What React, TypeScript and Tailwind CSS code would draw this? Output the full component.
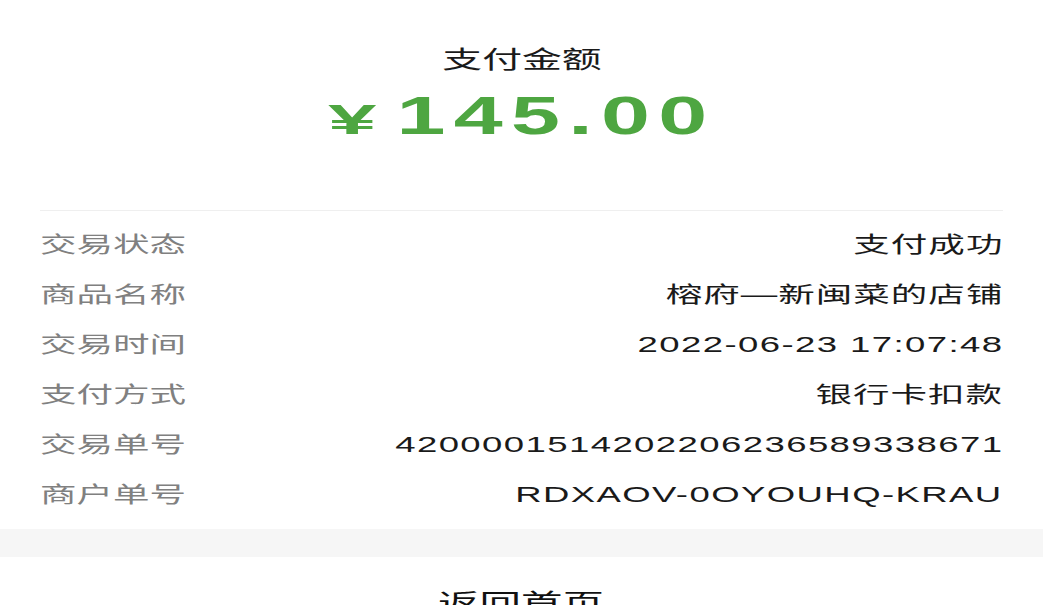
const rows = [
  { label: "交易状态", value: "支付成功", ascii: false },
  { label: "商品名称", value: "榕府—新闽菜的店铺", ascii: false },
  { label: "交易时间", value: "2022-06-23 17:07:48", ascii: true },
  { label: "支付方式", value: "银行卡扣款", ascii: false },
  { label: "交易单号", value: "4200001514202206236589338671", ascii: true },
  { label: "商户单号", value: "RDXAOV-0OYOUHQ-KRAU", ascii: true },
];

const font = "font-['Liberation_Sans','Noto_Sans_CJK_SC',sans-serif]";

const App = () => {
  return (
    <div className={`min-h-screen bg-white ${font}`}>
      <div className="flex flex-col items-center pt-[45px]">
        <div className="text-[24px] leading-[30px] text-[#1a1a1a]">
          <span className="inline-block scale-x-[1.66] origin-center">支付金额</span>
        </div>
        <div className="mt-[13px] h-[60px] flex items-center justify-center">
          <span className="inline-block scale-x-[1.66] origin-center whitespace-nowrap text-[#4ea641] font-bold">
            <span className="inline-block text-[42px] leading-[60px] scale-x-[1.25] origin-left mr-[18px]">¥</span>
            <span className="text-[53px] leading-[60px] tracking-[5px]">145.00</span>
          </span>
        </div>
      </div>

      <div className="mx-[40px] mt-[62px] h-px bg-[#efefef]" />

      <div className="px-[40px] pt-[9px] pb-[9px]">
        {rows.map((r) => (
          <div key={r.label} className="h-[50px] flex items-center justify-between text-[22px] leading-[30px]">
            <span className="inline-block scale-x-[1.66] origin-left text-[#808080] whitespace-nowrap">
              {r.label}
            </span>
            <span
              className={`inline-block scale-x-[1.66] origin-right text-[#1a1a1a] whitespace-nowrap ${
                r.ascii ? "tracking-[0.85px]" : "tracking-[0.6px]"
              }`}
            >
              {r.value}
            </span>
          </div>
        ))}
      </div>

      <div className="h-[28px] bg-[#f6f6f6]" />

      <div className="flex justify-center pt-[31px] pb-[20px]">
        <span className="inline-block scale-x-[1.66] origin-center text-[25px] leading-[30px] text-[#111]">
          返回首页
        </span>
      </div>
    </div>
  );
};

export default App;
